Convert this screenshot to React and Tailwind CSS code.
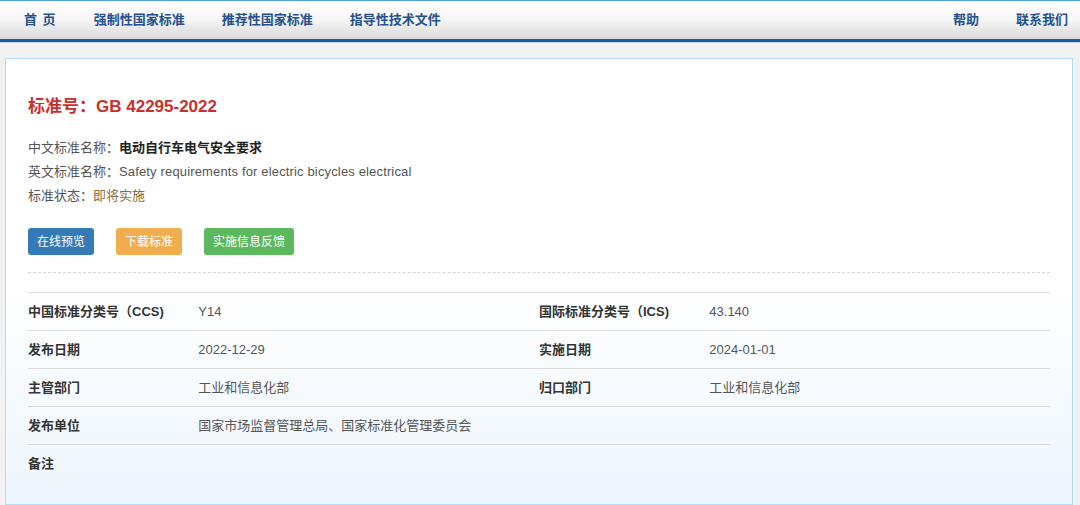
const navLeft = ['强制性国家标准', '推荐性国家标准', '指导性技术文件'];

const font = { fontFamily: '"Liberation Sans", "Noto Sans CJK SC", sans-serif' };

const Row = ({ children }) => (
  <div className="flex h-[38px] items-center border-t border-[#dddddd]">{children}</div>
);

const Label = ({ children }) => (
  <div className="w-1/6 shrink-0 text-[13px] font-bold text-[#333333]">{children}</div>
);

const Value = ({ children, wide }) => (
  <div className={`${wide ? 'w-5/6' : 'w-1/3'} shrink-0 text-[13px] text-[#555555]`}>{children}</div>
);

export default function App() {
  return (
    <div className="min-h-[505px] bg-[#f2f2f2]" style={font}>
      {/* Top nav */}
      <div className="border-t border-[#4aa3df] bg-gradient-to-b from-white via-[#f6f6f6] to-[#d8d8d8]">
        <div className="flex h-[38px] items-center pl-6 pr-3 text-[13px] font-bold text-[#24508f]">
          <span className="mr-[37px] tracking-[1px]">首 页</span>
          {navLeft.map((item) => (
            <span key={item} className="mr-[37px]">{item}</span>
          ))}
          <span className="ml-auto mr-[37px]">帮助</span>
          <span>联系我们</span>
        </div>
      </div>
      <div className="h-[3px] bg-[#1b5ba0]" />
      <div className="h-[1px] bg-[#c9d7e6]" />

      {/* Card */}
      <div className="mx-[5px] mr-[7px] mt-[15px] border border-[#b3ddf6] bg-gradient-to-b from-white via-white to-[#edf6fd] px-[22px] pb-[22px] pt-[36px]">
        <h1 className="text-[17px] font-bold leading-[24px] text-[#c9302c]">标准号：GB 42295-2022</h1>

        <div className="mt-[17px] text-[13px] leading-[24px] text-[#555555]">
          <p>
            中文标准名称：<span className="font-bold text-[#222222]">电动自行车电气安全要求</span>
          </p>
          <p>
            英文标准名称：<span className="tracking-[0.15px]">Safety requirements for electric bicycles electrical</span>
          </p>
          <p>
            标准状态：<span className="text-[#8a6d3b]">即将实施</span>
          </p>
        </div>

        <div className="mt-[20px] flex gap-[22px] text-[12px] text-white">
          <button className="h-[27px] rounded-[3px] bg-[#337ab7] px-[9px]">在线预览</button>
          <button className="h-[27px] rounded-[3px] bg-[#f0ad4e] px-[9px]">下载标准</button>
          <button className="h-[27px] rounded-[3px] bg-[#5cb85c] px-[9px]">实施信息反馈</button>
        </div>

        <div className="mt-[17px] border-t border-dashed border-[#d6d6d6]" />

        <div className="mt-[19px]">
          <Row>
            <Label>中国标准分类号（CCS)</Label>
            <Value>Y14</Value>
            <Label>国际标准分类号（ICS)</Label>
            <Value>43.140</Value>
          </Row>
          <Row>
            <Label>发布日期</Label>
            <Value>2022-12-29</Value>
            <Label>实施日期</Label>
            <Value>2024-01-01</Value>
          </Row>
          <Row>
            <Label>主管部门</Label>
            <Value>工业和信息化部</Value>
            <Label>归口部门</Label>
            <Value>工业和信息化部</Value>
          </Row>
          <Row>
            <Label>发布单位</Label>
            <Value wide>国家市场监督管理总局、国家标准化管理委员会</Value>
          </Row>
          <Row>
            <Label>备注</Label>
          </Row>
        </div>
      </div>
    </div>
  );
}
